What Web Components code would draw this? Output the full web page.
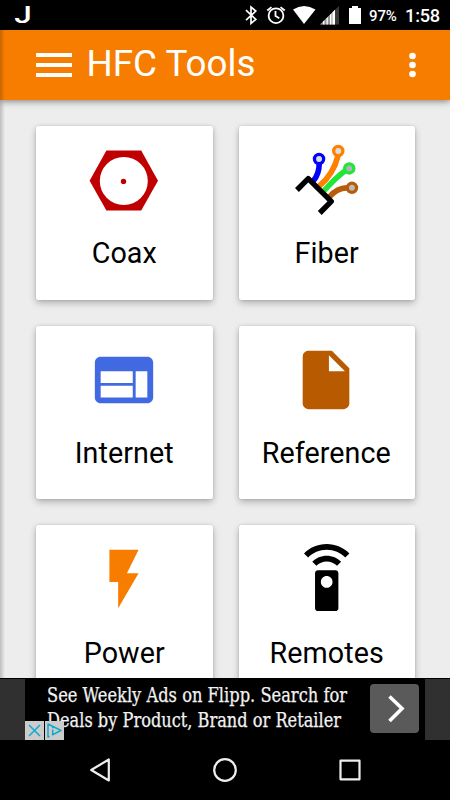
<!DOCTYPE html>
<html lang="en">
<head>
<meta charset="utf-8">
<title>HFC Tools</title>
<style>
html, body { margin: 0; height: 100%; background: #000; }
body { font-family: Roboto, "Liberation Sans", sans-serif; overflow: hidden; }
</style>
</head>
<body>
<tools-app></tools-app>
<script>
const define = (name, markup) => {
  const t = document.createElement('template');
  t.innerHTML = markup;
  customElements.define(name, class extends HTMLElement {
    constructor() {
      super();
      this.attachShadow({ mode: 'open' }).append(t.content.cloneNode(true));
    }
  });
};

define('status-bar', `
<style>
:host { display: flex; height: 30px; background: #000; color: #fff; align-items: center; box-sizing: border-box; padding: 0 10px 0 14px; }
svg { display: block; height: 30px; flex: none; fill: #fff; }
.gap { flex: 1; }
.pct { font-size: 15px; font-weight: 500; line-height: 30px; width: 28px; margin-left: 7px; padding-top: 2px; letter-spacing: -.1px; }
.time { font-size: 18.2px; font-weight: 500; line-height: 30px; width: 35px; margin-left: 8px; padding-top: 2px; white-space: nowrap; letter-spacing: -.2px; }
</style>
<svg width="18" viewBox="14 0 18 30"><text x="14.3" y="22.8" font-family="Roboto" font-weight="500" font-size="23.5" textLength="17.5" lengthAdjust="spacingAndGlyphs">J</text></svg>
<span class="gap"></span>
<svg width="16" viewBox="243 0 16 30"><path d="M246 10.2 L255.8 19.4 L251 23.4 V7 L255.8 11 L246 20.2" fill="none" stroke="#fff" stroke-width="1.7"/></svg>
<svg width="20" viewBox="266 0 20 30" style="margin-left:7px"><g fill="none" stroke="#fff" stroke-width="1.8"><circle cx="276" cy="15.7" r="7.4"/><path d="M275.5 11v5l3.8 2.3M267.3 10.5l4.2-3.4M284.7 10.5l-4.2-3.4"/></g></svg>
<svg width="24" viewBox="292 0 24 30" style="margin-left:6px"><path d="M304 24 L293 9.6 Q304 2.6 315.5 9.6Z"/></svg>
<svg width="20" viewBox="320 0 20 30" style="margin-left:4px"><path d="M320 24.5 L339 6 V24.5Z" fill="#3a3a3a"/><path d="M320 24.5 L335 9.8 V24.5Z" fill="#999"/><path d="M323 21.6v2.9h1.4v-4.3zM326.5 18.2v6.3h1.3v-7.6zM330 14.8v9.7h1.4V13.4zM332.5 12.3v12.2h2.5V9.8z"/></svg>
<svg width="14" viewBox="348 0 14 30" style="margin-left:8px"><path d="M349 8h3V6h6v2h3v16h-12z"/></svg>
<span class="pct">97%</span><span class="time">1:58</span>
`);

define('app-header', `
<style>
:host { display: flex; align-items: center; height: 70px; background: #f77d00; color: #fff; box-shadow: 0 1px 7px rgba(0,0,0,.5); position: relative; z-index: 1; box-sizing: border-box; padding: 0 31px 0 36px; }
h1 { margin: 0 0 0 14.5px; padding-bottom: 2px; flex: 1; font-size: 36.8px; font-weight: 400; line-height: 44px; }
svg { display: block; fill: #fff; }
</style>
<svg width="36" height="24"><path d="M0 0h36v4H0zM0 10h36v4H0zM0 20h36v4H0z"/></svg>
<h1><slot></slot></h1>
<svg width="14" height="26"><circle cx="7.5" cy="4" r="3.3"/><circle cx="7.5" cy="13" r="3.3"/><circle cx="7.5" cy="22" r="3.3"/></svg>
`);

define('tool-card', `
<style>
:host { display: flex; flex-direction: column; align-items: center; background: #fff; border-radius: 2.5px; box-shadow: 0 3px 7px rgba(0,0,0,.26), 0 0 3px rgba(0,0,0,.12); padding-top: 19px; box-sizing: border-box; color: #000; font-size: 28.7px; line-height: 34px; }
::slotted(svg) { display: block; width: 70px; height: 70px; overflow: visible; }
.label { margin-top: 21px; letter-spacing: .08px; }
</style>
<slot name="icon"></slot>
<div class="label"><slot></slot></div>
`);

define('tool-grid', `
<style>
:host { display: block; height: 578px; overflow: hidden; background: #ededed; }
.grid { display: grid; grid-template-columns: 176.5px 176.5px; grid-template-rows: 174px 173px 174px; gap: 26px; padding: 26px 36px; }
.row3 { padding-top: 20px; }
.row3 svg { margin-top: -1px; margin-bottom: 1px; }
.right { padding-right: 1px; }
</style>
<div class="grid">
<tool-card><svg slot="icon" viewBox="89 145 70 70"><path d="M89.6 180.7 106.4 150.5H141.2L158 180.7 141.2 210.5H106.4Z" fill="#c00000"/><circle cx="123.8" cy="181" r="24" fill="#fff"/><circle cx="123.5" cy="181.4" r="2.7" fill="#c00000"/></svg>Coax</tool-card>
<tool-card><svg slot="icon" viewBox="291.75 145 70 70"><g fill="none" stroke-width="5.6">
<path d="M313 181Q319 174 319 163" stroke="#0000ff"/><path d="M318.5 186.5Q333 175 338 155" stroke="#ff7f00"/><path d="M323.5 191Q336 177 346 170" stroke="#22e53a"/><path d="M329 197Q338 187 348 188" stroke="#b85c0a"/></g>
<g stroke-width="3.3" fill="#ddd"><circle cx="318.8" cy="159" r="4.6" stroke="#0000ff"/><circle cx="338" cy="151" r="4.6" stroke="#ff7f00"/><circle cx="349" cy="168.4" r="4.6" stroke="#22e53a" fill="#b4b4b4"/><circle cx="351.7" cy="187.8" r="4.6" stroke="#b85c0a" fill="#bbb"/></g>
<path d="M296.7 190 308 178.6 331 201.4 319.5 213" fill="none" stroke="#000" stroke-width="5.4" stroke-linejoin="round"/></svg>Fiber</tool-card>
<tool-card><svg slot="icon" viewBox="0 0 24 24" fill="#4169e1"><path d="M20 4H4c-1.1 0-1.99.9-1.99 2L2 18c0 1.1.9 2 2 2h16c1.1 0 2-.9 2-2V6c0-1.1-.9-2-2-2zm-5 14H4v-4h11v4zm0-5H4V9h11v4zm5 5h-4V9h4v9z"/></svg>Internet</tool-card>
<tool-card class="right"><svg slot="icon" viewBox="0 0 24 24" fill="#b85a00"><path d="M6 2c-1.1 0-1.99.9-1.99 2L4 20c0 1.1.89 2 1.99 2H18c1.1 0 2-.9 2-2V8l-6-6H6zm7 7V3.5L18.5 9H13z"/></svg>Reference</tool-card>
<tool-card class="row3"><svg slot="icon" viewBox="0 0 24 24" fill="#f77d00"><path d="M7 2v11h3v9l7-12h-4l4-8z"/></svg>Power</tool-card>
<tool-card class="row3"><svg slot="icon" viewBox="0.1 0 24 24"><path d="M15 9H9c-.55 0-1 .45-1 1v12c0 .55.45 1 1 1h6c.55 0 1-.45 1-1V10c0-.55-.45-1-1-1zm-3 6c-1.1 0-2-.9-2-2s.9-2 2-2 2 .9 2 2-.9 2-2 2zM7.05 6.05l1.41 1.41C9.37 6.56 10.62 6 12 6s2.63.56 3.54 1.46l1.41-1.41C15.68 4.78 13.93 4 12 4s-3.68.78-4.95 2.05zM12 0C8.96 0 6.21 1.23 4.22 3.22l1.41 1.41C7.26 3.01 9.51 2 12 2s4.74 1.01 6.36 2.64l1.41-1.41C17.79 1.23 15.04 0 12 0z"/></svg>Remotes</tool-card>
</div>
`);

define('ad-banner', `
<style>
:host { display: flex; height: 62px; background: #000; position: relative; box-sizing: border-box; padding-top: 1px; }
.side { width: 25px; background: #303030; flex: none; }
.copy { flex: 1; display: flex; padding-left: 22px; }
.copy svg { display: block; overflow: visible; fill: #f2f2f2; stroke: #f2f2f2; stroke-width: .25; font-family: "DejaVu Serif Condensed", "DejaVu Serif", serif; font-stretch: condensed; }
.go { width: 49px; height: 49px; margin: 5px 6px 0 0; background: #5a5a5a; border-radius: 4px; flex: none; }
.choices { position: absolute; left: 25px; bottom: 0; display: flex; gap: 1px; }
.choices svg { display: block; background: #ccc; fill: none; stroke: #12a9cf; stroke-width: 1.5; }
</style>
<div class="side"></div>
<div class="copy"><svg width="300" height="60" font-size="20.5"><text x="0" y="22.6" textLength="300" lengthAdjust="spacingAndGlyphs">See Weekly Ads on Flipp. Search for</text><text x="0" y="47.5" textLength="294" lengthAdjust="spacingAndGlyphs">Deals by Product, Brand or Retailer</text></svg></div>
<div class="go"><svg width="49" height="49"><path d="M19.5 12.5 32 24.5 19.5 37" fill="none" stroke="#fff" stroke-width="3.6"/></svg></div>
<div class="side"></div>
<div class="choices"><svg width="19" height="19"><path d="M4 4 15 15M15 4 4 15"/></svg><svg width="19" height="19"><path d="M4.500 15.500 3 16V3L16 9.500 7 14M7.700 8.500v4.500M7.700 5.500v1.700" stroke-linejoin="round"/></svg></div>
`);

define('nav-bar', `
<style>
:host { display: flex; height: 60px; background: #000; align-items: center; justify-content: space-between; padding: 0 88px; box-sizing: border-box; }
svg { display: block; fill: none; stroke: #eee; stroke-width: 2.2; stroke-linejoin: round; }
</style>
<svg width="24" height="26"><path d="M20.8 2.5V23.5L3.2 13Z"/></svg>
<svg width="26" height="26"><circle cx="13" cy="13" r="10.8"/></svg>
<svg width="24" height="26"><rect x="2.5" y="3.7" width="19" height="18.6"/></svg>
`);

define('tools-app', `
<style>
:host { display: flex; flex-direction: column; width: 450px; height: 800px; position: relative; }
.edge { position: absolute; left: 0; top: 30px; width: 5px; height: 648px; z-index: 2; background: linear-gradient(90deg, rgba(0,0,0,.2), transparent); }
</style>
<status-bar></status-bar>
<app-header>HFC Tools</app-header>
<tool-grid></tool-grid>
<ad-banner></ad-banner>
<nav-bar></nav-bar>
<div class="edge"></div>
`);
</script>
</body>
</html>
